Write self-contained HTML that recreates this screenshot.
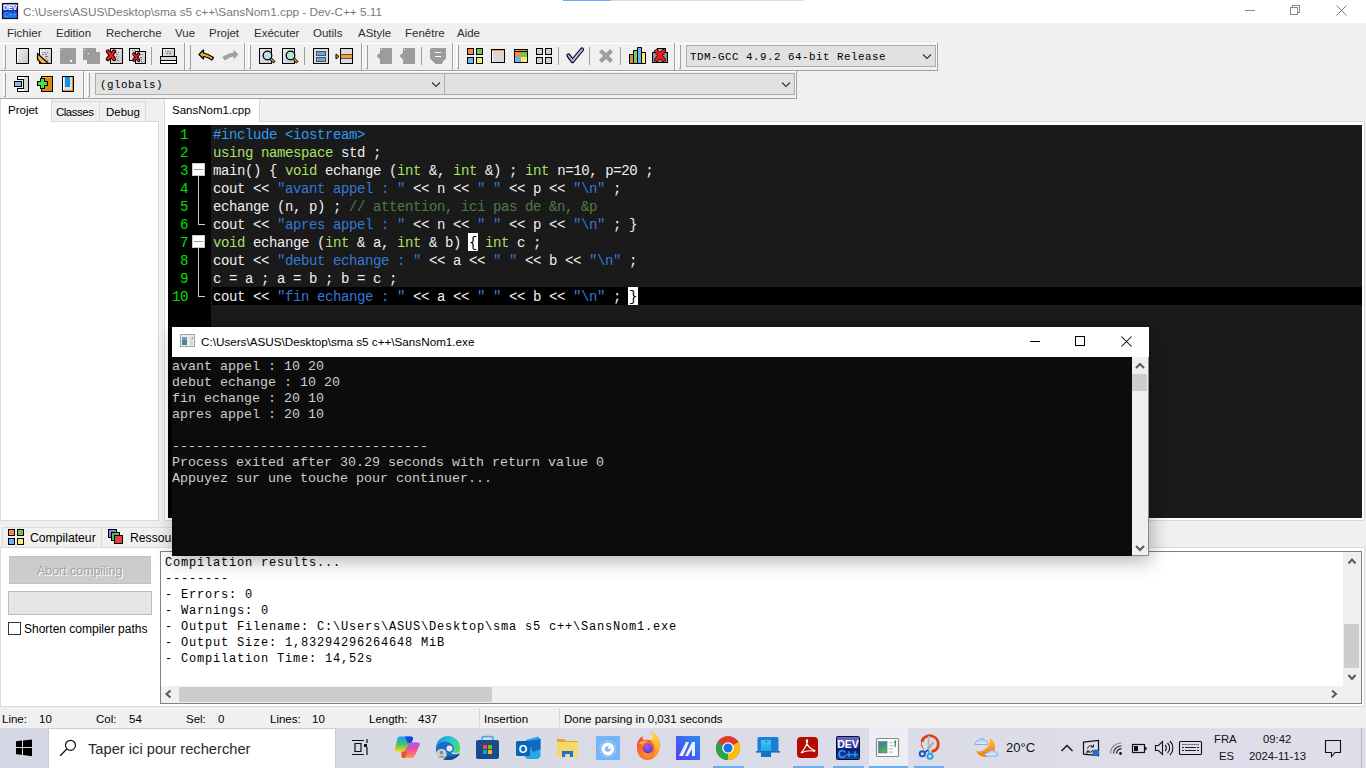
<!DOCTYPE html>
<html><head><meta charset="utf-8">
<style>
*{margin:0;padding:0;box-sizing:border-box}
html,body{width:1366px;height:768px;overflow:hidden;background:#f0f0f0;font-family:"Liberation Sans",sans-serif;font-size:12px;color:#000;position:relative}
.a{position:absolute}
.t{position:absolute;white-space:pre;line-height:16px}
.mono{font-family:"Liberation Mono",monospace}
svg{position:absolute;overflow:visible}
/* editor */
.code{position:absolute;left:213px;white-space:pre;font-family:"Liberation Mono",monospace;font-size:14px;letter-spacing:-0.4px;line-height:18px;color:#f0f0f0}
.ln{position:absolute;left:168px;width:20px;text-align:right;font-family:"Liberation Mono",monospace;font-size:14px;letter-spacing:-0.4px;line-height:18px;color:#00e000}
.kw{color:#a8e063}.pp{color:#2b9bf4}.st{color:#3478d6}.cm{color:#4e7a45}
.con{position:absolute;left:172px;white-space:pre;font-family:"Liberation Mono",monospace;font-size:13.33px;line-height:16px;color:#cccccc}
.log{position:absolute;left:165px;white-space:pre;font-family:"Liberation Mono",monospace;font-size:12px;letter-spacing:0.8px;line-height:16px;color:#000}
</style></head><body>

<!-- TITLE BAR -->
<div class="a" style="left:0;top:0;width:1366px;height:23px;background:#fff"></div>
<div class="a" style="left:563px;top:0;width:48px;height:1px;background:#62aefa"></div>
<div class="a" style="left:611px;top:0;width:193px;height:1px;background:#dcdcdc"></div>
<!-- dev icon -->
<svg style="left:0;top:0" width="22" height="22">
<defs><linearGradient id="devg" x1="0" y1="0" x2="0" y2="1"><stop offset="0" stop-color="#b8b8e8"/><stop offset="0.45" stop-color="#1838c0"/><stop offset="1" stop-color="#1488f8"/></linearGradient></defs>
<rect x="2.5" y="3.5" width="15" height="15" fill="url(#devg)" stroke="#0a0a30" stroke-width="1.2"/>
<text x="10" y="10.2" font-family="Liberation Sans" font-size="7.2" font-weight="bold" fill="#fff" text-anchor="middle" letter-spacing="-0.3">DEV</text>
<text x="10" y="16.8" font-family="Liberation Sans" font-size="7.2" font-weight="bold" fill="#3a9af8" text-anchor="middle" letter-spacing="-0.3">C++</text>
</svg>
<div class="t" style="left:23px;top:4px;font-size:11.8px;color:#787878">C:\Users\ASUS\Desktop\sma s5 c++\SansNom1.cpp - Dev-C++ 5.11</div>
<!-- window controls -->
<div class="a" style="left:1245px;top:10px;width:10px;height:1px;background:#888"></div>
<div class="a" style="left:1292px;top:5px;width:8px;height:8px;border:1px solid #888;background:#fff"></div>
<div class="a" style="left:1290px;top:7px;width:8px;height:8px;border:1px solid #888;background:#fff"></div>
<svg style="left:1336px;top:5px" width="11" height="11"><path d="M0.5 0.5L10.5 10.5M10.5 0.5L0.5 10.5" stroke="#777" stroke-width="1"/></svg>

<!-- MENU BAR -->
<div class="a" style="left:0;top:23px;width:1366px;height:20px;background:#f0f0f0"></div>
<div class="t" style="left:7px;top:25px;font-size:11.5px;color:#2e2e2e">Fichier</div>
<div class="t" style="left:56px;top:25px;font-size:11.5px;color:#2e2e2e">Edition</div>
<div class="t" style="left:106px;top:25px;font-size:11.5px;color:#2e2e2e">Recherche</div>
<div class="t" style="left:175px;top:25px;font-size:11.5px;color:#2e2e2e">Vue</div>
<div class="t" style="left:209px;top:25px;font-size:11.5px;color:#2e2e2e">Projet</div>
<div class="t" style="left:254px;top:25px;font-size:11.5px;color:#2e2e2e">Exécuter</div>
<div class="t" style="left:313px;top:25px;font-size:11.5px;color:#2e2e2e">Outils</div>
<div class="t" style="left:358px;top:25px;font-size:11.5px;color:#2e2e2e">AStyle</div>
<div class="t" style="left:405px;top:25px;font-size:11.5px;color:#2e2e2e">Fenêtre</div>
<div class="t" style="left:457px;top:25px;font-size:11.5px;color:#2e2e2e">Aide</div>

<!-- TOOLBARS -->
<div class="a" style="left:0;top:43px;width:938px;height:1px;background:#fff"></div>
<div class="a" style="left:0;top:70px;width:938px;height:1px;background:#a0a0a0"></div>
<div class="a" style="left:0;top:71px;width:797px;height:1px;background:#fff"></div>
<div class="a" style="left:0;top:98px;width:797px;height:1px;background:#a0a0a0"></div>
<div class="a" style="left:937px;top:43px;width:1px;height:28px;background:#a0a0a0"></div>
<div class="a" style="left:796px;top:71px;width:1px;height:28px;background:#a0a0a0"></div>
<svg style="left:0;top:0" width="1366" height="100" shape-rendering="crispEdges">
<defs>
<linearGradient id="gpg" x1="0" y1="0" x2="1" y2="1"><stop offset="0" stop-color="#ececec"/><stop offset="1" stop-color="#c8c8c8"/></linearGradient>
</defs>
<g fill="#a0a0a0">
<!-- boundaries row1 -->
<rect x="184" y="43" width="1" height="27"/><rect x="244" y="43" width="1" height="27"/><rect x="361" y="43" width="1" height="27"/><rect x="452" y="43" width="1" height="27"/><rect x="674" y="43" width="1" height="27"/>
<!-- grips row1 -->
<rect x="5" y="45" width="1" height="24"/><rect x="4" y="68" width="1" height="1"/>
<rect x="190" y="45" width="1" height="24"/><rect x="189" y="68" width="1" height="1"/>
<rect x="250" y="45" width="1" height="24"/><rect x="249" y="68" width="1" height="1"/>
<rect x="367" y="45" width="1" height="24"/><rect x="366" y="68" width="1" height="1"/>
<rect x="458" y="45" width="1" height="24"/><rect x="457" y="68" width="1" height="1"/>
<rect x="680" y="45" width="1" height="24"/><rect x="679" y="68" width="1" height="1"/>
<!-- grips row2 -->
<rect x="5" y="73" width="1" height="24"/><rect x="4" y="96" width="1" height="1"/>
<rect x="83" y="71" width="1" height="27"/>
<rect x="89" y="73" width="1" height="24"/><rect x="88" y="96" width="1" height="1"/>
<!-- separators -->
<rect x="151" y="47" width="1" height="18"/><rect x="304" y="47" width="1" height="18"/><rect x="421" y="47" width="1" height="18"/><rect x="558" y="47" width="1" height="18"/><rect x="589" y="47" width="1" height="18"/><rect x="620" y="47" width="1" height="18"/>
</g>
<g fill="#fff">
<rect x="185" y="43" width="1" height="27"/><rect x="245" y="43" width="1" height="27"/><rect x="362" y="43" width="1" height="27"/><rect x="453" y="43" width="1" height="27"/><rect x="675" y="43" width="1" height="27"/>
<rect x="3" y="45" width="1" height="23"/><rect x="188" y="45" width="1" height="23"/><rect x="248" y="45" width="1" height="23"/><rect x="365" y="45" width="1" height="23"/><rect x="456" y="45" width="1" height="23"/><rect x="678" y="45" width="1" height="23"/>
<rect x="3" y="73" width="1" height="23"/><rect x="84" y="71" width="1" height="27"/><rect x="87" y="73" width="1" height="23"/>
</g>
<!-- new -->
<rect x="16" y="48" width="13" height="16" fill="#000"/><rect x="17" y="49" width="11" height="14" fill="url(#gpg)"/><rect x="17" y="49" width="1" height="14" fill="#fff"/>
<!-- open -->
<rect x="39" y="48" width="13" height="16" fill="#000"/><rect x="40" y="49" width="11" height="14" fill="url(#gpg)"/><rect x="40" y="49" width="1" height="5" fill="#fff"/>
<g fill="#777"><rect x="42" y="52" width="1" height="1"/><rect x="44" y="52" width="2" height="1"/><rect x="47" y="52" width="1" height="1"/><rect x="42" y="54" width="2" height="1"/><rect x="45" y="54" width="2" height="1"/><rect x="45" y="56" width="2" height="1"/><rect x="47" y="56" width="1" height="1"/><rect x="46" y="58" width="1" height="1"/><rect x="47" y="60" width="1" height="1"/></g>
<path d="M37.5 53.5 L37.5 59.5 L41.5 63.5 L48.5 63.5 Z" fill="#f8b32c" stroke="#000" stroke-width="1.2" shape-rendering="auto"/>
<!-- save disabled -->
<rect x="60" y="48" width="16" height="16" fill="#9c9c9c"/><rect x="61" y="49" width="1" height="1" fill="#fff"/><rect x="70" y="60" width="2" height="2" fill="#fff"/>
<!-- save all disabled -->
<path d="M83 48H96V52H100V64H87V60H83Z" fill="#9c9c9c"/><rect x="84" y="49" width="1" height="1" fill="#fff"/><rect x="88" y="53" width="1" height="1" fill="#fff"/>
<!-- close -->
<rect x="110" y="48" width="13" height="16" fill="#000"/><rect x="111" y="49" width="11" height="14" fill="url(#gpg)"/>
<g fill="#777"><rect x="116" y="52" width="1" height="1"/><rect x="118" y="52" width="1" height="1"/><rect x="116" y="54" width="2" height="1"/><rect x="116" y="56" width="1" height="1"/><rect x="118" y="56" width="1" height="1"/><rect x="117" y="58" width="1" height="1"/><rect x="115" y="60" width="1" height="1"/><rect x="117" y="60" width="2" height="1"/></g>
<path d="M108 51.5L114 59M114 51.5L108 59" stroke="#000" stroke-width="4.4" stroke-linecap="round" shape-rendering="auto"/><path d="M108 51.5L114 59M114 51.5L108 59" stroke="#f41c1c" stroke-width="2.3" stroke-linecap="round" shape-rendering="auto"/>
<!-- close all -->
<rect x="129" y="48" width="11" height="13" fill="#000"/><rect x="130" y="49" width="9" height="11" fill="url(#gpg)"/>
<rect x="135" y="51" width="11" height="13" fill="#000"/><rect x="136" y="52" width="9" height="11" fill="url(#gpg)"/>
<g fill="#777"><rect x="140" y="54" width="1" height="1"/><rect x="142" y="54" width="1" height="1"/><rect x="140" y="57" width="2" height="1"/><rect x="141" y="59" width="1" height="1"/><rect x="139" y="61" width="1" height="1"/><rect x="141" y="61" width="1" height="1"/><rect x="132" y="50" width="1" height="1"/><rect x="134" y="50" width="1" height="1"/></g>
<path d="M134 54L138.5 60M138.5 54L134 60" stroke="#000" stroke-width="3.6" stroke-linecap="round" shape-rendering="auto"/><path d="M134 54L138.5 60M138.5 54L134 60" stroke="#f41c1c" stroke-width="1.8" stroke-linecap="round" shape-rendering="auto"/>
<!-- printer -->
<rect x="162" y="48" width="13" height="9" fill="#000"/><rect x="163" y="49" width="11" height="7" fill="url(#gpg)"/>
<g fill="#777"><rect x="165" y="51" width="1" height="1"/><rect x="167" y="51" width="2" height="1"/><rect x="170" y="51" width="1" height="1"/><rect x="166" y="53" width="2" height="1"/><rect x="169" y="53" width="2" height="1"/></g>
<rect x="160" y="56" width="17" height="8" fill="#000"/><rect x="161" y="57" width="15" height="3" fill="#d8d8d8"/><rect x="161" y="61" width="15" height="2" fill="#fff"/>
<!-- undo -->
<path d="M199 54.5L203.5 50L203.5 53L208 54.5L213.5 57.5L212 60L207.5 57.5L203.5 56.5L203.5 59Z" fill="#f8b32c" stroke="#000" stroke-width="1.2" stroke-linejoin="round" shape-rendering="auto"/>
<!-- redo -->
<path d="M238.5 54.5L233.5 49.5L233.5 52.5L229 53.5L222 57L225 60.5L229.5 57.5L233.5 56.5L233.5 59.5Z" fill="#a0a0a0" shape-rendering="auto"/>
<!-- find -->
<rect x="259" y="48" width="13" height="16" fill="#000"/><rect x="260" y="49" width="11" height="14" fill="url(#gpg)"/>
<path d="M270.5 58.5L274.5 62.5" stroke="#000" stroke-width="3" shape-rendering="auto"/><path d="M270.5 58.5L274 62" stroke="#e8a020" stroke-width="1.3" shape-rendering="auto"/>
<circle cx="267.5" cy="55.5" r="4.3" fill="#b8e2f2" stroke="#000" stroke-width="1.3" shape-rendering="auto"/>
<!-- find next -->
<rect x="282" y="48" width="13" height="16" fill="#000"/><rect x="283" y="49" width="11" height="14" fill="url(#gpg)"/>
<path d="M293.5 58.5L297.5 62.5" stroke="#000" stroke-width="3" shape-rendering="auto"/><path d="M293.5 58.5L297 62" stroke="#e8a020" stroke-width="1.3" shape-rendering="auto"/>
<circle cx="290.5" cy="55.5" r="4.3" fill="#a6ecc8" stroke="#000" stroke-width="1.3" shape-rendering="auto"/>
<!-- window w/ two bars -->
<rect x="313" y="48" width="16" height="16" fill="#000"/><rect x="314" y="49" width="14" height="14" fill="#dcdcdc"/>
<rect x="316" y="51" width="10" height="5" fill="#555"/><rect x="317" y="52" width="8" height="3" fill="#6aa0f0"/>
<rect x="316" y="57" width="10" height="5" fill="#555"/><rect x="317" y="58" width="8" height="3" fill="#6aa0f0"/>
<!-- window w/ orange bar -->
<rect x="340" y="48" width="13" height="16" fill="#000"/><rect x="341" y="49" width="11" height="14" fill="#dcdcdc"/>
<rect x="341" y="55" width="11" height="3" fill="#f0a020"/><rect x="341" y="54" width="11" height="1" fill="#555"/><rect x="341" y="58" width="11" height="1" fill="#555"/>
<path d="M336 54L339 56.5L336 59Z" fill="#f0a020" stroke="#000" stroke-width="1" shape-rendering="auto"/>
<!-- gray tag 1,2 -->
<path d="M380 48H392V64H380V60L377 57V55L380 52Z" fill="#9c9c9c"/><rect x="381" y="49" width="1" height="1" fill="#fff"/>
<path d="M403 48H415V64H403V60L400 57V55L403 52Z" fill="#9c9c9c"/><rect x="404" y="49" width="1" height="1" fill="#fff"/>
<!-- shield -->
<path d="M431 48H445L446 49V58L443 62L441 64H435L433 62L430 58V49Z" fill="#9c9c9c"/><rect x="435" y="52" width="6" height="1" fill="#fff"/><rect x="435" y="56" width="6" height="1" fill="#fff"/>
<!-- 4 colored squares -->
<rect x="467" y="48" width="7" height="7" fill="#000"/><rect x="468" y="49" width="5" height="5" fill="#f7884a"/>
<rect x="476" y="48" width="7" height="7" fill="#000"/><rect x="477" y="49" width="5" height="5" fill="#6cc850"/>
<rect x="467" y="57" width="7" height="7" fill="#000"/><rect x="468" y="58" width="5" height="5" fill="#70b0f8"/>
<rect x="476" y="57" width="7" height="7" fill="#000"/><rect x="477" y="58" width="5" height="5" fill="#f8f060"/>
<!-- window -->
<rect x="491" y="49" width="14" height="14" fill="#000"/><rect x="492" y="51" width="12" height="11" fill="#d8d8d8"/><rect x="492" y="50" width="12" height="1" fill="#f8a000"/><rect x="492" y="51" width="1" height="11" fill="#fff"/>
<!-- colored window -->
<rect x="514" y="49" width="14" height="14" fill="#000"/><rect x="515" y="50" width="12" height="1" fill="#f8a000"/>
<rect x="515" y="52" width="6" height="5" fill="#f7884a"/><rect x="521" y="52" width="6" height="5" fill="#6cc850"/><rect x="515" y="57" width="6" height="5" fill="#70b0f8"/><rect x="521" y="57" width="6" height="5" fill="#f8f060"/>
<!-- 4 gray squares -->
<rect x="536" y="48" width="7" height="7" fill="#000"/><rect x="537" y="49" width="5" height="5" fill="#d0d0d0"/>
<rect x="545" y="48" width="7" height="7" fill="#000"/><rect x="546" y="49" width="5" height="5" fill="#d0d0d0"/>
<rect x="536" y="57" width="7" height="7" fill="#000"/><rect x="537" y="58" width="5" height="5" fill="#d0d0d0"/>
<rect x="545" y="57" width="7" height="7" fill="#000"/><rect x="546" y="58" width="5" height="5" fill="#d0d0d0"/>
<!-- check -->
<path d="M568.5 55.5L572.5 61L582 49.5" fill="none" stroke="#000" stroke-width="4.2" stroke-linejoin="round" stroke-linecap="round" shape-rendering="auto"/>
<path d="M568.5 55.5L572.5 61L582 49.5" fill="none" stroke="#c8a0f8" stroke-width="2" stroke-linejoin="round" stroke-linecap="round" shape-rendering="auto"/>
<!-- gray X -->
<path d="M599 52L602 49L606 53L610 49L613 52L609 56L613 60L610 63L606 59L602 63L599 60L603 56Z" fill="#a0a0a0" shape-rendering="auto"/>
<!-- chart -->
<rect x="629" y="47" width="17" height="17" fill="none"/>
<path d="M629.5 63.5V54.5H633.5V50.5H637.5V47.5H641.5V52.5H645.5V63.5Z" fill="#000" stroke="#000" stroke-width="1" shape-rendering="auto"/>
<rect x="630" y="55" width="3" height="8" fill="#f08040"/><rect x="634" y="51" width="3" height="12" fill="#70d060"/><rect x="638" y="48" width="3" height="15" fill="#70b0f8"/><rect x="642" y="53" width="3" height="10" fill="#f8f060"/>
<!-- red x on gear -->
<rect x="652" y="52" width="16" height="11" fill="#000"/><rect x="653" y="53" width="14" height="9" fill="#909090"/><rect x="657" y="48" width="9" height="5" fill="#000"/><rect x="658" y="49" width="7" height="4" fill="#b0b0b0"/>
<path d="M654 51L657 49L660 52.5L663 49L666 51L662.5 55.5L666 60L663 62L660 58.5L657 62L654 60L657.5 55.5Z" fill="#f01818" stroke="#000" stroke-width="0.8" shape-rendering="auto"/>
<!-- row2 icons -->
<path d="M17 76H29V92H17V88H23V80H17Z" fill="#000"/>
<rect x="18" y="77" width="6" height="2" fill="#fff"/><rect x="24" y="77" width="4" height="14" fill="#d6d6d6"/><rect x="18" y="89" width="6" height="2" fill="#fff"/>
<rect x="14" y="81" width="8" height="6" fill="#000"/><rect x="15" y="82" width="6" height="4" fill="#86b4f4"/>
<rect x="41" y="76" width="12" height="16" fill="#000"/><rect x="42" y="77" width="10" height="14" fill="#d8880c"/><rect x="42" y="77" width="10" height="1" fill="#f0b040"/>
<path d="M40 78H45V81H48V86H45V89H40V86H37V81H40Z" fill="#000"/><path d="M41 79H44V82H47V85H44V88H41V85H38V82H41Z" fill="#44e044"/>
<rect x="62" y="76" width="12" height="16" fill="#000"/><rect x="63" y="77" width="10" height="14" fill="#e09018"/><rect x="63" y="77" width="9" height="13" fill="#dcdcdc"/><rect x="63" y="77" width="1" height="13" fill="#fff"/><rect x="65" y="77" width="5" height="10" fill="#1890d8"/><rect x="63" y="90" width="10" height="1" fill="#e09018"/>
</svg>
<!-- combos -->
<div class="a" style="left:686px;top:45px;width:250px;height:22px;background:#e1e1e1;border:1px solid #adadad"></div><div class="a" style="left:936px;top:44px;width:1px;height:26px;background:#fafafa"></div>
<div class="t" style="left:690px;top:49px;font-family:'Liberation Mono',monospace;font-size:10.8px;letter-spacing:0.52px;color:#000">TDM-GCC 4.9.2 64-bit Release</div>
<svg style="left:922px;top:52px" width="12" height="8"><path d="M1 2.5L5 6.5L9 2.5" fill="none" stroke="#333" stroke-width="1.1"/></svg>
<div class="a" style="left:95px;top:73px;width:350px;height:22px;background:#e1e1e1;border:1px solid #adadad"></div>
<div class="t" style="left:100px;top:77px;font-family:'Liberation Mono',monospace;font-size:10.8px;letter-spacing:0.52px;color:#000">(globals)</div>
<svg style="left:431px;top:80px" width="12" height="8"><path d="M1 2.5L5 6.5L9 2.5" fill="none" stroke="#333" stroke-width="1.1"/></svg>
<div class="a" style="left:444px;top:73px;width:351px;height:22px;background:#e1e1e1;border:1px solid #adadad"></div><div class="a" style="left:795px;top:72px;width:1px;height:26px;background:#fafafa"></div>
<svg style="left:781px;top:80px" width="12" height="8"><path d="M1 2.5L5 6.5L9 2.5" fill="none" stroke="#333" stroke-width="1.1"/></svg>

<!-- LEFT PANEL -->
<div class="a" style="left:0;top:121px;width:159px;height:400px;background:#fff;border:1px solid #dadada"></div>
<div class="a" style="left:51px;top:101px;width:49px;height:21px;background:#f0f0f0;border:1px solid #dadada"></div>
<div class="a" style="left:99px;top:101px;width:47px;height:21px;background:#f0f0f0;border:1px solid #dadada"></div>
<div class="a" style="left:0px;top:99px;width:52px;height:23px;background:#fff;border:1px solid #dadada;border-bottom:none;border-top:none"></div>
<div class="t" style="left:8px;top:102px;font-size:11.5px">Projet</div>
<div class="t" style="left:56px;top:104px;font-size:11.5px;letter-spacing:-0.5px">Classes</div>
<div class="t" style="left:106px;top:104px;font-size:11.5px">Debug</div>

<!-- EDITOR -->
<div class="a" style="left:164px;top:121px;width:1201px;height:400px;background:#fff;border:1px solid #dadada"></div>
<div class="a" style="left:164px;top:99px;width:96px;height:23px;background:#fff;border:1px solid #dadada;border-bottom:none;border-top:none"></div>
<div class="t" style="left:172px;top:102px;font-size:11.5px">SansNom1.cpp</div>
<div class="a" style="left:168px;top:125px;width:1194px;height:393px;background:#1a1a1a"></div>
<div class="a" style="left:168px;top:125px;width:43px;height:393px;background:#000"></div>
<div class="a" style="left:212px;top:287px;width:1150px;height:18px;background:#000"></div>
<!-- fold markers -->
<div class="a" style="left:192px;top:163px;width:13px;height:13px;background:#fff;border:1px solid #c8c8c8"></div>
<div class="a" style="left:194px;top:169px;width:9px;height:1px;background:#999"></div>
<div class="a" style="left:198px;top:176px;width:1px;height:49px;background:#c8c8c8"></div>
<div class="a" style="left:198px;top:224px;width:7px;height:1px;background:#c8c8c8"></div>
<div class="a" style="left:192px;top:235px;width:13px;height:13px;background:#fff;border:1px solid #c8c8c8"></div>
<div class="a" style="left:194px;top:241px;width:9px;height:1px;background:#999"></div>
<div class="a" style="left:198px;top:248px;width:1px;height:49px;background:#c8c8c8"></div>
<div class="a" style="left:198px;top:296px;width:7px;height:1px;background:#c8c8c8"></div>
<div class="ln" style="top:126px">1</div>
<div class="ln" style="top:144px">2</div>
<div class="ln" style="top:162px">3</div>
<div class="ln" style="top:180px">4</div>
<div class="ln" style="top:198px">5</div>
<div class="ln" style="top:216px">6</div>
<div class="ln" style="top:234px">7</div>
<div class="ln" style="top:252px">8</div>
<div class="ln" style="top:270px">9</div>
<div class="ln" style="top:288px">10</div>

<div class="code" style="top:126px"><span class="pp">#include &lt;iostream&gt;</span></div>
<div class="code" style="top:144px"><span class="kw">using namespace</span> std ;</div>
<div class="code" style="top:162px">main() { <span class="kw">void</span> echange (<span class="kw">int</span> &amp;, <span class="kw">int</span> &amp;) ; <span class="kw">int</span> n=10, p=20 ;</div>
<div class="code" style="top:180px">cout &lt;&lt; <span class="st">"avant appel : "</span> &lt;&lt; n &lt;&lt; <span class="st">" "</span> &lt;&lt; p &lt;&lt; <span class="st">"\n"</span> ;</div>
<div class="code" style="top:198px">echange (n, p) ; <span class="cm">// attention, ici pas de &amp;n, &amp;p</span></div>
<div class="code" style="top:216px">cout &lt;&lt; <span class="st">"apres appel : "</span> &lt;&lt; n &lt;&lt; <span class="st">" "</span> &lt;&lt; p &lt;&lt; <span class="st">"\n"</span> ; }</div>
<div class="code" style="top:234px"><span class="kw">void</span> echange (<span class="kw">int</span> &amp; a, <span class="kw">int</span> &amp; b) { <span class="kw">int</span> c ;</div>
<div class="code" style="top:252px">cout &lt;&lt; <span class="st">"debut echange : "</span> &lt;&lt; a &lt;&lt; <span class="st">" "</span> &lt;&lt; b &lt;&lt; <span class="st">"\n"</span> ;</div>
<div class="code" style="top:270px">c = a ; a = b ; b = c ;</div>
<div class="code" style="top:288px">cout &lt;&lt; <span class="st">"fin echange : "</span> &lt;&lt; a &lt;&lt; <span class="st">" "</span> &lt;&lt; b &lt;&lt; <span class="st">"\n"</span> ; }</div>

<!-- brace highlights -->
<div class="a" style="left:468px;top:233px;width:10px;height:18px;background:#fff"></div>
<div class="code" style="left:469px;top:234px;color:#000">{</div>
<div class="a" style="left:628px;top:287px;width:10px;height:18px;background:#fff"></div>
<div class="code" style="left:629px;top:288px;color:#000">}</div>

<!-- BOTTOM PANEL -->
<div class="a" style="left:0;top:547px;width:1365px;height:160px;background:#fff;border:1px solid #dadada"></div>
<div class="a" style="left:2px;top:527px;width:100px;height:21px;background:#f0f0f0;border:1px solid #dadada"></div>
<div class="a" style="left:101px;top:527px;width:100px;height:21px;background:#f0f0f0;border:1px solid #dadada"></div>
<svg style="left:0;top:520px" width="200" height="30" shape-rendering="crispEdges">
<rect x="8" y="9" width="7" height="7" fill="#000"/><rect x="9" y="10" width="5" height="5" fill="#f7884a"/>
<rect x="17" y="9" width="7" height="7" fill="#000"/><rect x="18" y="10" width="5" height="5" fill="#6cc850"/>
<rect x="8" y="18" width="7" height="7" fill="#000"/><rect x="9" y="19" width="5" height="5" fill="#70b0f8"/>
<rect x="17" y="18" width="7" height="7" fill="#000"/><rect x="18" y="19" width="5" height="5" fill="#f8f060"/>
<rect x="108" y="9" width="9" height="9" fill="#000"/><rect x="109" y="10" width="7" height="7" fill="#8080f0"/>
<rect x="111" y="12" width="9" height="9" fill="#000"/><rect x="112" y="13" width="7" height="7" fill="#50c050"/>
<rect x="114" y="15" width="9" height="9" fill="#000"/><rect x="115" y="16" width="7" height="7" fill="#e84040"/>
</svg>
<div class="t" style="left:30px;top:530px;font-size:12.2px">Compilateur</div>
<div class="t" style="left:130px;top:530px;font-size:12.2px">Ressources</div>
<div class="a" style="left:9px;top:556px;width:142px;height:28px;background:#cccccc;border:1px solid #c2c2c2"></div>
<div class="t" style="left:38px;top:564px;font-size:12.4px;color:#fff">Abort compiling</div><div class="t" style="left:37px;top:563px;font-size:12.4px;color:#a2a2a2">Abort compiling</div>
<div class="a" style="left:8px;top:591px;width:144px;height:24px;background:#e6e6e6;border:1px solid #bcbcbc"></div>
<div class="a" style="left:8px;top:622px;width:13px;height:13px;background:#fff;border:1px solid #333"></div>
<div class="t" style="left:24px;top:621px;font-size:12px">Shorten compiler paths</div>
<div class="a" style="left:160px;top:551px;width:1202px;height:153px;background:#fff;border:1px solid #828282"></div>
<div class="log" style="top:555px">Compilation results...
--------
- Errors: 0
- Warnings: 0
- Output Filename: C:\Users\ASUS\Desktop\sma s5 c++\SansNom1.exe
- Output Size: 1,83294296264648 MiB
- Compilation Time: 14,52s</div>
<!-- log scrollbars -->
<div class="a" style="left:161px;top:686px;width:1182px;height:17px;background:#f0f0f0"></div>
<div class="a" style="left:179px;top:687px;width:313px;height:15px;background:#cdcdcd"></div>
<svg style="left:164px;top:689px" width="10" height="10"><path d="M6.5 1.5L2.5 5L6.5 8.5" fill="none" stroke="#5a5a5a" stroke-width="2"/></svg>
<svg style="left:1329px;top:689px" width="10" height="10"><path d="M3 1.5L7 5L3 8.5" fill="none" stroke="#5a5a5a" stroke-width="2"/></svg>
<div class="a" style="left:1343px;top:552px;width:18px;height:151px;background:#f0f0f0"></div>
<div class="a" style="left:1344px;top:624px;width:15px;height:44px;background:#cdcdcd"></div>
<svg style="left:1347px;top:557px" width="10" height="10"><path d="M1.5 6.5L5 2.5L8.5 6.5" fill="none" stroke="#5a5a5a" stroke-width="2"/></svg>
<svg style="left:1347px;top:672px" width="10" height="10"><path d="M1.5 3L5 7L8.5 3" fill="none" stroke="#5a5a5a" stroke-width="2"/></svg>

<!-- STATUS BAR -->
<div class="a" style="left:0;top:707px;width:1366px;height:21px;background:#f0f0f0"></div>
<div class="a" style="left:479px;top:708px;width:1px;height:19px;background:#d7d7d7"></div>
<div class="a" style="left:559px;top:708px;width:1px;height:19px;background:#d7d7d7"></div>
<div class="t" style="left:2px;top:711px;font-size:11.5px">Line:</div>
<div class="t" style="left:39px;top:711px;font-size:11.5px">10</div>
<div class="t" style="left:96px;top:711px;font-size:11.5px">Col:</div>
<div class="t" style="left:129px;top:711px;font-size:11.5px">54</div>
<div class="t" style="left:186px;top:711px;font-size:11.5px">Sel:</div>
<div class="t" style="left:218px;top:711px;font-size:11.5px">0</div>
<div class="t" style="left:270px;top:711px;font-size:11.5px">Lines:</div>
<div class="t" style="left:312px;top:711px;font-size:11.5px">10</div>
<div class="t" style="left:369px;top:711px;font-size:11.5px">Length:</div>
<div class="t" style="left:418px;top:711px;font-size:11.5px">437</div>
<div class="t" style="left:484px;top:711px;font-size:11.5px">Insertion</div>
<div class="t" style="left:564px;top:711px;font-size:11.5px">Done parsing in 0,031 seconds</div>

<!-- TASKBAR -->
<div class="a" style="left:0;top:728px;width:1366px;height:40px;background:linear-gradient(90deg,#d5d7e4,#d9dbe7 50%,#dfdeea)"></div>
<div class="a" style="left:1361px;top:728px;width:1px;height:40px;background:#b4b4c0"></div>
<div class="a" style="left:869px;top:728px;width:39px;height:40px;background:#eceef4"></div>
<div class="a" style="left:48px;top:728px;width:288px;height:40px;background:#c9ccd6"></div>
<div class="a" style="left:49px;top:729px;width:286px;height:39px;background:#fff"></div>
<div class="t" style="left:88px;top:739px;font-size:14.7px;line-height:20px;color:#2a2a2a">Taper ici pour rechercher</div>
<svg style="left:0;top:728px" width="1366" height="40">
<!-- windows logo -->
<path d="M16 13.2L22 12.6V19H16Z M23 12.5L32 11.6V19H23Z M16 20H22V26.8L16 26.2Z M23 20H32V28.2L23 27.1Z" fill="#000"/>
<!-- search magnifier -->
<circle cx="70.5" cy="17.3" r="5" fill="none" stroke="#111" stroke-width="1.2"/>
<path d="M66.8 21L60.2 27.8" stroke="#111" stroke-width="1.3"/>
<!-- task view -->
<g fill="none" stroke="#111" stroke-width="1.2"><path d="M352 12.5H364M352 26.5H364M355 15.5V23.5H361V15.5Z M367 11V15M367 19V27"/></g>
<rect x="364" y="16" width="3" height="3" fill="#111"/>
<!-- copilot -->
<defs>
<linearGradient id="cop" x1="0" y1="0" x2="1" y2="1"><stop offset="0" stop-color="#1a9cf0"/><stop offset="0.35" stop-color="#58c8a8"/><stop offset="0.6" stop-color="#c878e8"/><stop offset="1" stop-color="#f05a3c"/></linearGradient>
<linearGradient id="edg" x1="0" y1="0" x2="1" y2="1"><stop offset="0" stop-color="#3cc8e8"/><stop offset="0.6" stop-color="#50d070"/><stop offset="1" stop-color="#1070c0"/></linearGradient>
<linearGradient id="ma" x1="0" y1="1" x2="1" y2="0"><stop offset="0" stop-color="#5a3cf0"/><stop offset="1" stop-color="#2090f0"/></linearGradient>
<radialGradient id="ff" cx="0.6" cy="0.35" r="0.7"><stop offset="0" stop-color="#ffd040"/><stop offset="0.5" stop-color="#ff6a30"/><stop offset="1" stop-color="#e03080"/></radialGradient>
<linearGradient id="sun" x1="0" y1="0" x2="0" y2="1"><stop offset="0" stop-color="#ffc040"/><stop offset="1" stop-color="#f09010"/></linearGradient>
</defs>
<defs>
<linearGradient id="copL" x1="0" y1="0" x2="0" y2="1"><stop offset="0" stop-color="#1aa0f8"/><stop offset="0.5" stop-color="#40c070"/><stop offset="1" stop-color="#f8d808"/></linearGradient>
<linearGradient id="copR" x1="0" y1="0" x2="0" y2="1"><stop offset="0" stop-color="#b050f0"/><stop offset="0.5" stop-color="#f05098"/><stop offset="1" stop-color="#f8a050"/></linearGradient>
</defs>
<path d="M397.5 10Q398 8.5 400 8.5H411Q413.5 9 413 11L408 22Q407 23.5 405 23.5H396.5Q394.5 23 395 21Z" fill="url(#copL)"/>
<path d="M405 8.5H411Q413.5 9 413 11L411.5 15H407.5Z" fill="#1848d8"/>
<path d="M410 14.5H418Q420.5 15 419.5 17.5L414.5 28.5Q413.5 30 411.5 30H403Q401 29.5 401.5 27.5Z" fill="url(#copR)"/>
<path d="M401.5 23.5H407.5L405 30H403Q401 29.5 401.5 27.5Z" fill="#f05020"/>
<!-- edge -->
<defs><linearGradient id="edg2" x1="0" y1="0.2" x2="1" y2="0.7"><stop offset="0" stop-color="#1a90e0"/><stop offset="0.5" stop-color="#30c8d0"/><stop offset="1" stop-color="#50e050"/></linearGradient></defs>
<circle cx="448" cy="20" r="12" fill="url(#edg2)"/>
<path d="M436 21C437 14 446 12 451 15.5C455 18.5 454.5 23 451.5 24.5C454 26 457 26 460 24.5C459 29 453 32.5 447 32C440 31.5 436 26.5 436 21Z" fill="#1a6cc4"/>
<path d="M448.5 28.5C452 29 456.5 27.5 459.8 25C458.5 29.5 453 32.3 447 32C444 31.8 441 30.5 439.5 28.5Z" fill="#0e4f9c"/>
<circle cx="449.5" cy="20.5" r="3" fill="#e4ecf2"/>
<path d="M451.5 24.5C454 26 457 26 460 24.5" fill="none" stroke="#d8dae6" stroke-width="1.2"/>
<circle cx="441.5" cy="26" r="5.2" fill="#d0d0d0"/><circle cx="441.5" cy="24.6" r="1.9" fill="#8a8a8a"/><path d="M438.2 29.6C438.5 27.5 444.5 27.5 444.8 29.6Z" fill="#8a8a8a"/>
<!-- store -->
<path d="M482 13V10.5C482 9 483 8.5 484 8.5H491C492 8.5 493 9 493 10.5V13" fill="none" stroke="#40a8f0" stroke-width="1.6"/>
<rect x="476" y="12" width="23" height="19" rx="2" fill="#1a4a8c"/>
<rect x="483" y="17" width="4" height="4" fill="#f25022"/><rect x="488" y="17" width="4" height="4" fill="#7fba00"/><rect x="483" y="22" width="4" height="4" fill="#00a4ef"/><rect x="488" y="22" width="4" height="4" fill="#ffb900"/>
<!-- outlook -->
<path d="M526 12L538 8.5L540.5 11V28.5L538 31H527L525 29Z" fill="#28a8e8"/>
<path d="M527 13L540.5 11V21L533 24Z" fill="#1068c0"/>
<rect x="516" y="13" width="14" height="15" rx="1.5" fill="#0a64b8"/>
<text x="523" y="25" font-family="Liberation Sans" font-size="11" font-weight="bold" fill="#fff" text-anchor="middle">O</text>
<!-- explorer -->
<path d="M557 11H564L566 13H578V29H557Z" fill="#e8a820"/>
<rect x="557" y="14" width="21" height="15" fill="#f8d868"/>
<path d="M562 29V23H573V29H570V26H565V29Z" fill="#2070d0"/>
<!-- speedtest -->
<rect x="596" y="8" width="24" height="24" fill="#76b4f8"/>
<circle cx="607.8" cy="21" r="4.6" fill="none" stroke="#fff" stroke-width="3.6"/>
<path d="M608 21L612 16.5" stroke="#fff" stroke-width="1.6"/>
<circle cx="607.8" cy="21" r="8" fill="none" stroke="#fff" stroke-width="1" stroke-dasharray="1 1.6" opacity="0.9"/>
<!-- firefox -->
<defs>
<radialGradient id="ff2" cx="0.45" cy="0.75" r="0.75"><stop offset="0" stop-color="#ff9a30"/><stop offset="0.6" stop-color="#ff5a28"/><stop offset="1" stop-color="#f02a6a"/></radialGradient>
<linearGradient id="ffy" x1="0" y1="0" x2="0" y2="1"><stop offset="0" stop-color="#ffe040"/><stop offset="1" stop-color="#ff9020"/></linearGradient>
<radialGradient id="ffp" cx="0.4" cy="0.3" r="0.8"><stop offset="0" stop-color="#a060f0"/><stop offset="1" stop-color="#5030c0"/></radialGradient>
</defs>
<path d="M637 18C637 12 641 9 643 8.5C642 11 643 12 645 12C648 11.5 652 12 654 14C655 9 653 6 651 4C657 6 660.5 12 659.5 19C659 26.5 653.5 32 647.5 32C641 32 636.5 26.5 637 18Z" fill="url(#ff2)"/>
<path d="M651 4C657 6 660.5 12 659.5 19C659 24 656 28 652 30C656 25 656 17 651 13C653 10 653 7 651 4Z" fill="url(#ffy)"/>
<circle cx="647.8" cy="20.5" r="5" fill="url(#ffp)"/>
<path d="M639 15C641 12.5 645 12 648 13.5C646 14 644 14.5 643 16.5C641.5 16.5 640 16 639 15Z" fill="#ffb030"/>
<!-- MA -->
<rect x="676" y="8" width="24" height="24" fill="url(#ma)"/>
<path d="M679 28L686 14H689L683 28Z M685 28L692 14H695L695 28H692L692 21L688 28Z" fill="#fff" opacity="0.9"/>
<!-- chrome -->
<circle cx="728" cy="20" r="12" fill="#e33b2e"/>
<path d="M728 20L717.6 14A12 12 0 0 0 728 32Z" fill="#2ba24c"/>
<path d="M728 20L728 32A12 12 0 0 0 738.4 14Z" fill="#fbbd07"/>
<circle cx="728" cy="20" r="5.8" fill="#fff"/><circle cx="728" cy="20" r="4.5" fill="#1a73e8"/>
<!-- computer -->
<defs><linearGradient id="cmp" x1="0" y1="0" x2="0" y2="1"><stop offset="0" stop-color="#40c8f8"/><stop offset="1" stop-color="#1890e0"/></linearGradient></defs>
<rect x="757.5" y="9" width="21" height="14.5" rx="1.5" fill="#1a80d4"/>
<rect x="761" y="12" width="10" height="16.5" rx="0.8" fill="url(#cmp)"/>
<rect x="756" y="23" width="24" height="1.6" fill="#1570c0"/>
<rect x="761" y="24.5" width="10" height="4.5" fill="#1670c4"/>
<rect x="765" y="13" width="2.5" height="0.8" fill="#1560a0"/>
<!-- acrobat -->
<rect x="797" y="9" width="21" height="21" rx="4" fill="#b30b00"/>
<path d="M801 25C804 22 808 15 807.5 12.5C807 11 806 12 806.5 14C807 17 810 21 814 22C815.5 22.3 815 23.5 813 23C810 22.5 805 23 801 25Z" fill="none" stroke="#fff" stroke-width="1.2"/>
<!-- devcpp -->
<defs><linearGradient id="dvt" x1="0" y1="0" x2="0" y2="1"><stop offset="0" stop-color="#6a6ac0"/><stop offset="0.45" stop-color="#2a38a8"/><stop offset="0.55" stop-color="#0c1c70"/><stop offset="1" stop-color="#1448b0"/></linearGradient></defs>
<rect x="836" y="8" width="24" height="24" rx="2" fill="#0a0f28"/>
<rect x="837" y="9" width="22" height="22" rx="1" fill="url(#dvt)"/>
<text x="848" y="19.5" font-family="Liberation Sans" font-size="10.5" font-weight="bold" fill="#fff" text-anchor="middle">DEV</text>
<text x="848" y="29.5" font-family="Liberation Sans" font-size="11" font-weight="bold" fill="#2aa0ff" text-anchor="middle" letter-spacing="-0.3">C++</text>
<!-- active app (window icon) -->
<defs><linearGradient id="wg" x1="0" y1="0" x2="0.4" y2="1"><stop offset="0" stop-color="#5a7ab8"/><stop offset="0.3" stop-color="#3a8a80"/><stop offset="1" stop-color="#50b060"/></linearGradient></defs>
<rect x="876.5" y="10.5" width="22" height="18" rx="1" fill="#fbfbfb" stroke="#8a8a8a" stroke-width="1.2"/>
<rect x="878.5" y="13.5" width="8.5" height="11.5" fill="url(#wg)" stroke="#6070a0" stroke-width="0.6"/>
<g fill="#c8c8c8"><rect x="889" y="14" width="4" height="1.3"/><rect x="889" y="17" width="4" height="1.3"/><rect x="889" y="20" width="4" height="1.3"/><rect x="889" y="23.5" width="4" height="1.3"/></g>
<rect x="894.5" y="13" width="1.4" height="6" fill="#3aa050"/><rect x="894.5" y="12.5" width="1.4" height="2" fill="#3060b0"/>
<!-- snipping -->
<path d="M922 14C922.5 9 928 7 932 8C937 9.5 939 14 938 18.5C937 21.5 934.5 23 931.5 23.5" fill="none" stroke="#e04010" stroke-width="2.8"/>
<path d="M921.5 14.5C921 17 922 19.5 924 21" fill="none" stroke="#d04010" stroke-width="1"/>
<path d="M929 8L928.3 22" stroke="#b8b8b8" stroke-width="2"/><path d="M933.5 14L928 21.5" stroke="#a8a8a8" stroke-width="2"/>
<circle cx="922.3" cy="25.8" r="2.6" fill="none" stroke="#0a5ac0" stroke-width="1.9"/><circle cx="930" cy="28.3" r="2.6" fill="none" stroke="#20a0f0" stroke-width="1.9"/>
<path d="M924.5 24.5L928 22" stroke="#0a5ac0" stroke-width="1.6"/><path d="M929.5 25.5L928.5 22.5" stroke="#20a0f0" stroke-width="1.6"/>
<!-- underlines -->
<g fill="#6aaef0"><rect x="713" y="38" width="31" height="2"/><rect x="793" y="38" width="31" height="2"/><rect x="833" y="38" width="31" height="2"/><rect x="869" y="38" width="39" height="2"/><rect x="914" y="38" width="30" height="2"/></g>
<!-- weather -->
<defs><linearGradient id="moon" x1="0.3" y1="0" x2="0.5" y2="1"><stop offset="0" stop-color="#ffc840"/><stop offset="1" stop-color="#f07a10"/></linearGradient>
<linearGradient id="cld" x1="0" y1="0" x2="0" y2="1"><stop offset="0" stop-color="#a8d0f8"/><stop offset="1" stop-color="#e0eefc"/></linearGradient></defs>
<path d="M989.5 10A10 10 0 1 1 976 23C983 25 991 19 989.5 10Z" fill="url(#moon)"/>
<path d="M975 16.5C974.5 14 976.5 12.5 978.5 13C979.5 10.5 983.5 10 985 12.5C987 12.5 988 14 987.5 16.5Z" fill="url(#cld)" stroke="#78a8e0" stroke-width="0.9"/>
<path d="M985 28C984.5 25.5 986.5 24 988.5 24.5C989.5 22 993.5 21.5 995 24C997 24 998 25.5 997.5 28Z" fill="url(#cld)" stroke="#78a8e0" stroke-width="0.9"/>
<!-- chevron -->
<path d="M1061.5 23L1067 17.5L1072.5 23" fill="none" stroke="#111" stroke-width="1.3"/>
<!-- screen icon -->
<path d="M1083.5 14.2L1098.5 12.5V27.5L1083.5 26.2Z" fill="none" stroke="#111" stroke-width="1.2"/>
<path d="M1087.5 20.5C1088 18 1091 17 1093 18.5M1093.5 16.5V19H1091M1093 22C1092.5 24 1089.5 25 1087.5 23.5M1087 25.5V23H1089.5" fill="none" stroke="#111" stroke-width="1"/>
<circle cx="1095.8" cy="24.8" r="3.4" fill="#2a6ec0"/>
<!-- wifi -->
<g fill="none" stroke-width="1.2"><path d="M1110.5 25.5A10.5 10.5 0 0 1 1121.5 15" stroke="#888"/><path d="M1113.5 25.5A7.5 7.5 0 0 1 1121.5 18" stroke="#333"/><path d="M1116.5 25.5A4.5 4.5 0 0 1 1121.5 21" stroke="#111"/></g>
<circle cx="1120.5" cy="25.5" r="1.4" fill="#111"/>
<!-- battery -->
<rect x="1132.5" y="16.5" width="12" height="8" fill="none" stroke="#111" stroke-width="1.2"/><rect x="1134" y="18" width="4" height="5" fill="#111"/><rect x="1145" y="19" width="1.5" height="3" fill="#111"/>
<!-- volume -->
<path d="M1155.5 17.5H1158.5L1162.5 13.5V26.5L1158.5 22.5H1155.5Z" fill="none" stroke="#111" stroke-width="1.1"/>
<g fill="none" stroke="#111" stroke-width="1.1"><path d="M1165 17A4 4 0 0 1 1165 23"/><path d="M1167.5 15A7 7 0 0 1 1167.5 25"/><path d="M1170 13A10 10 0 0 1 1170 27"/></g>
<!-- keyboard -->
<rect x="1179.5" y="13.5" width="22" height="13" rx="1" fill="none" stroke="#111" stroke-width="1.1"/>
<g fill="#222"><rect x="1182" y="16" width="17" height="1" opacity="0.85"/><rect x="1182" y="19" width="2" height="1"/><rect x="1185" y="19" width="11" height="1"/><rect x="1197" y="19" width="2" height="1"/><rect x="1182" y="22" width="2" height="1"/><rect x="1185" y="22" width="11" height="1"/><rect x="1197" y="22" width="2" height="1"/></g>
<g fill="#d8dae6"><rect x="1183.5" y="16" width="0.8" height="1"/><rect x="1185.5" y="16" width="0.8" height="1"/><rect x="1187.5" y="16" width="0.8" height="1"/><rect x="1189.5" y="16" width="0.8" height="1"/><rect x="1191.5" y="16" width="0.8" height="1"/><rect x="1193.5" y="16" width="0.8" height="1"/><rect x="1195.5" y="16" width="0.8" height="1"/><rect x="1197.5" y="16" width="0.8" height="1"/></g>
<!-- notification -->
<path d="M1325.5 12.5H1340.5V24.5H1335L1331.5 28.5V24.5H1325.5Z" fill="none" stroke="#111" stroke-width="1.1"/>
</svg>
<div class="t" style="left:1006px;top:740px;font-size:13px;color:#111">20°C</div>
<div class="t" style="left:1214px;top:731px;font-size:11.3px;color:#111">FRA</div>
<div class="t" style="left:1219px;top:748px;font-size:11.3px;color:#111">ES</div>
<div class="t" style="left:1263px;top:731px;font-size:11.3px;color:#111">09:42</div>
<div class="t" style="left:1249px;top:748px;font-size:11.3px;color:#111">2024-11-13</div>

<!-- CONSOLE WINDOW -->
<div class="a" style="left:172px;top:327px;width:977px;height:229px;background:#0c0c0c;box-shadow:2px 5px 18px rgba(0,0,0,0.30)"></div>
<div class="a" style="left:172px;top:327px;width:977px;height:30px;background:#fff"></div>
<svg style="left:180px;top:334px" width="16" height="14" shape-rendering="crispEdges">
<rect x="0" y="0" width="15" height="13" fill="#9aa4b0"/><rect x="1" y="1" width="13" height="11" fill="#e8ecf0"/>
<rect x="2" y="3" width="5" height="8" fill="#4a8a70"/><rect x="2" y="3" width="5" height="3" fill="#6a9ad0"/><rect x="10" y="3" width="3" height="8" fill="#d0d8e0"/><rect x="12" y="3" width="1" height="2" fill="#7ab"/>
</svg>
<div class="t" style="left:201px;top:334px;font-size:11.7px">C:\Users\ASUS\Desktop\sma s5 c++\SansNom1.exe</div>
<div class="a" style="left:1030px;top:341px;width:10px;height:1px;background:#000"></div>
<div class="a" style="left:1075px;top:336px;width:10px;height:10px;border:1px solid #000"></div>
<svg style="left:1121px;top:336px" width="11" height="11"><path d="M0.5 0.5L10.5 10.5M10.5 0.5L0.5 10.5" stroke="#000" stroke-width="1.05"/></svg>
<div class="a" style="left:1132px;top:357px;width:16px;height:198px;background:#f0f0f0"></div>
<div class="a" style="left:1148px;top:357px;width:1px;height:199px;background:#8a8a8a"></div>
<div class="a" style="left:1132px;top:555px;width:17px;height:1px;background:#8a8a8a"></div>
<div class="a" style="left:1132px;top:374px;width:15px;height:17px;background:#cdcdcd"></div>
<svg style="left:1135px;top:362px" width="10" height="8"><path d="M1 6L5 2L9 6" fill="none" stroke="#5a5a5a" stroke-width="2"/></svg>
<svg style="left:1135px;top:544px" width="10" height="8"><path d="M1 2L5 6L9 2" fill="none" stroke="#5a5a5a" stroke-width="2"/></svg>
<div class="con" style="top:359px">avant appel : 10 20
debut echange : 10 20
fin echange : 20 10
apres appel : 20 10

--------------------------------
Process exited after 30.29 seconds with return value 0
Appuyez sur une touche pour continuer...</div>

</body></html>
